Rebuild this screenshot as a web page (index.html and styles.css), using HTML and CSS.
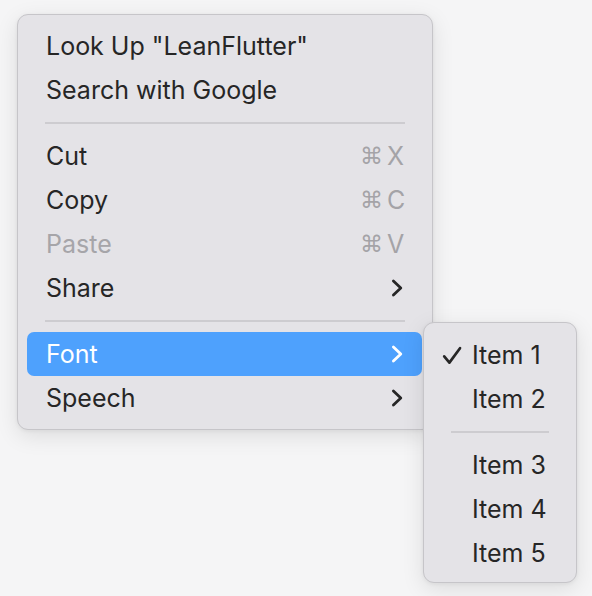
FILE: index.html
```html
<!DOCTYPE html>
<html>
<head>
<meta charset="utf-8">
<link rel="stylesheet" href="styles.css">
</head>
<body>
<div class="stage">
  <div class="menu">
    <div class="row"><span class="label">Look Up "LeanFlutter"</span></div>
    <div class="row"><span class="label">Search with Google</span></div>
    <div class="sep"></div>
    <div class="row"><span class="label">Cut</span><span class="key"><span class="cmd">⌘</span><span class="k">X</span></span></div>
    <div class="row"><span class="label">Copy</span><span class="key"><span class="cmd">⌘</span><span class="k">C</span></span></div>
    <div class="row disabled"><span class="label">Paste</span><span class="key"><span class="cmd">⌘</span><span class="k">V</span></span></div>
    <div class="row"><span class="label">Share</span>
      <svg class="chev" viewBox="0 0 12 18" width="12" height="18"><path d="M2.4 2 L9.8 9 L2.4 16" fill="none" stroke="currentColor" stroke-width="2.8" stroke-linecap="round" stroke-linejoin="round"/></svg>
    </div>
    <div class="sep"></div>
    <div class="row active"><span class="label">Font</span>
      <svg class="chev" viewBox="0 0 12 18" width="12" height="18"><path d="M2.4 2 L9.8 9 L2.4 16" fill="none" stroke="currentColor" stroke-width="2.8" stroke-linecap="round" stroke-linejoin="round"/></svg>
    </div>
    <div class="row"><span class="label">Speech</span>
      <svg class="chev" viewBox="0 0 12 18" width="12" height="18"><path d="M2.4 2 L9.8 9 L2.4 16" fill="none" stroke="currentColor" stroke-width="2.8" stroke-linecap="round" stroke-linejoin="round"/></svg>
    </div>
  </div>
  <div class="submenu">
    <div class="srow"><span class="check"><svg viewBox="0 0 20 19" width="20" height="19"><path d="M2.2 10.4 L7.4 16.6 L18 2.2" fill="none" stroke="currentColor" stroke-width="2.7" stroke-linecap="round" stroke-linejoin="round"/></svg></span><span class="label">Item 1</span></div>
    <div class="srow"><span class="check"></span><span class="label">Item 2</span></div>
    <div class="ssep"></div>
    <div class="srow"><span class="check"></span><span class="label">Item 3</span></div>
    <div class="srow"><span class="check"></span><span class="label">Item 4</span></div>
    <div class="srow"><span class="check"></span><span class="label">Item 5</span></div>
  </div>
</div>
</body>
</html>
```

FILE: styles.css
```css
html, body {
  margin: 0;
  padding: 0;
}
body {
  width: 592px;
  height: 596px;
  background: #f5f5f6;
  font-family: "Inter", "Liberation Sans", "DejaVu Sans", sans-serif;
  color: #262626;
  overflow: hidden;
}
.stage {
  position: relative;
  padding: 14px 0 0 17px;
}
.menu {
  width: 395px;
  padding: 9px 10px 9px 9px;
  background: #e4e3e7;
  border: 1px solid #c6c5c9;
  border-radius: 11px;
  box-shadow: 0 6px 22px rgba(0, 0, 0, 0.10), 0 1px 4px rgba(0, 0, 0, 0.06);
}
.row {
  height: 44px;
  display: flex;
  align-items: center;
  justify-content: space-between;
  padding: 0 20px 0 19px;
  border-radius: 7px;
  font-size: 25px;
}
.row.disabled {
  color: #a6a5a9;
}
.row.active {
  background: #4ea1fd;
  color: #ffffff;
}
.key {
  display: flex;
  align-items: center;
  color: #a4a3a7;
  font-size: 25px;
  margin-right: -2px;
}
.cmd {
  font-family: "DejaVu Sans", sans-serif;
  font-size: 23px;
  margin-right: 4px;
}
.k {
  width: 17px;
  text-align: right;
}
.chev {
  display: block;
  color: #262626;
  margin-right: -1px;
}
.row.active .chev {
  color: #ffffff;
}
.sep {
  height: 2px;
  margin: 10px 17px 10px 18px;
  background: #cdccd0;
}
.submenu {
  position: absolute;
  left: 423px;
  top: 322px;
  width: 134px;
  padding: 10px 9px 7px 9px;
  background: #e4e3e7;
  border: 1px solid #c6c5c9;
  border-radius: 11px;
  box-shadow: 0 6px 22px rgba(0, 0, 0, 0.10), 0 1px 4px rgba(0, 0, 0, 0.06);
}
.srow {
  height: 44px;
  display: flex;
  align-items: center;
  font-size: 25px;
}
.check {
  width: 39px;
  padding-left: 9px;
  box-sizing: border-box;
  display: flex;
  align-items: center;
}
.check svg {
  display: block;
}
.ssep {
  height: 2px;
  margin: 10px 18px 10px 18px;
  background: #cdccd0;
}
```
